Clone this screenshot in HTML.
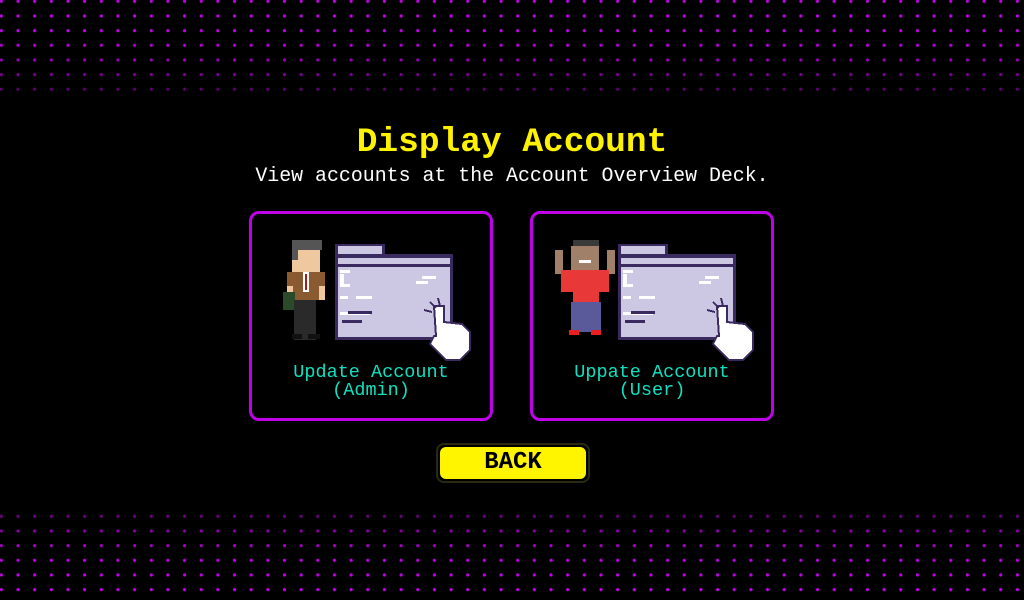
<!DOCTYPE html>
<html><head><meta charset="utf-8"><style>
html,body{margin:0;padding:0;background:#000;width:1024px;height:600px;overflow:hidden;position:relative;font-family:"Liberation Mono",monospace}
.dots{position:absolute;left:0;width:1024px;height:92px;background-image:radial-gradient(circle,#c800f0 1.3px,transparent 1.9px);background-size:16.67px 14.67px;background-position:-7px -6px}
.top{top:0;-webkit-mask-image:linear-gradient(#000 40%,rgba(0,0,0,.45));mask-image:linear-gradient(#000 40%,rgba(0,0,0,.45))}
.bot{bottom:0;height:94px;background-position:-7px 3px;-webkit-mask-image:linear-gradient(rgba(0,0,0,.45),#000 60%);mask-image:linear-gradient(rgba(0,0,0,.45),#000 60%)}
h1{position:absolute;top:123px;left:0;width:1024px;text-align:center;margin:0;color:#fff200;font-size:34.5px;line-height:40px;font-weight:bold}
.sub{position:absolute;top:164px;left:0;width:1024px;text-align:center;color:#fff;font-size:19.9px;line-height:24px}
.card{position:absolute;top:211px;width:238px;height:204px;border:3px solid #c000e8;border-radius:10px}
.card svg{position:absolute;left:0;top:0}
.lbl{position:absolute;top:150px;left:0;width:100%;text-align:center;color:#10e0c0;font-size:18.5px;line-height:18px}
.back{position:absolute;left:436px;top:443px;width:150px;height:36px;border:2px solid #2a2a10;border-radius:8px}
.back div{position:absolute;left:2px;top:2px;right:2px;bottom:2px;background:#fff500;border-radius:6px;text-align:center;font-weight:bold;font-size:24px;line-height:32px;color:#000}
</style></head><body>
<div class="dots top"></div><div class="dots bot"></div>
<h1>Display Account</h1>
<div class="sub">View accounts at the Account Overview Deck.</div>

<div class="card" style="left:249px">
<svg width="238" height="204" viewBox="0 0 238 204" shape-rendering="crispEdges">
 <rect x="40" y="26" width="30" height="10" fill="#555"/>
 <rect x="40" y="36" width="28" height="22" fill="#f0c8a0"/>
 <rect x="40" y="30" width="6" height="16" fill="#555"/>
 <rect x="35" y="58" width="38" height="28" fill="#8a5a30"/>
 <rect x="51" y="58" width="6" height="20" fill="#fff"/><rect x="53" y="60" width="2" height="16" fill="#a02020"/>
 <rect x="35" y="72" width="6" height="14" fill="#f0c8a0"/><rect x="67" y="72" width="6" height="14" fill="#f0c8a0"/>
 <rect x="31" y="78" width="12" height="18" fill="#2a4a2a"/>
 <rect x="42" y="86" width="22" height="40" fill="#2a2a2a"/>
 <rect x="40" y="120" width="10" height="5" fill="#111"/><rect x="56" y="120" width="12" height="5" fill="#111"/>
 <rect x="83" y="30" width="50" height="12" fill="#3a2a60"/>
 <rect x="86" y="32" width="44" height="10" fill="#ccc8e4"/>
 <rect x="83" y="40" width="118" height="86" fill="#3a2a60"/>
 <rect x="86" y="44" width="112" height="6" fill="#ccc8e4"/>
 <rect x="86" y="53" width="112" height="70" fill="#ccc8e4"/>
 <g fill="#fff"><rect x="88" y="56" width="10" height="3"/><rect x="88" y="60" width="4" height="10"/><rect x="88" y="70" width="10" height="3"/><rect x="88" y="82" width="8" height="3"/><rect x="104" y="82" width="16" height="3"/><rect x="170" y="62" width="14" height="3"/><rect x="164" y="67" width="12" height="3"/><rect x="88" y="98" width="30" height="3"/></g>
 <g fill="#3a2a60"><rect x="96" y="97" width="24" height="3"/><rect x="90" y="106" width="20" height="3"/></g>
 <path d="M182 92 L192 92 L192 108 L210 110 L218 118 L218 136 L208 146 L194 146 L178 130 L182 122 L184 122 Z" fill="#fff" stroke="#3a2a60" stroke-width="2"/>
 <g stroke="#3a2a60" stroke-width="2"><line x1="178" y1="88" x2="184" y2="94"/><line x1="186" y1="84" x2="188" y2="92"/><line x1="172" y1="96" x2="180" y2="98"/></g>
</svg>
<div class="lbl">Update Account<br>(Admin)</div>
</div>

<div class="card" style="left:530px">
<svg width="238" height="204" viewBox="0 0 238 204" shape-rendering="crispEdges">
 <rect x="40" y="26" width="26" height="8" fill="#3a3a3a"/>
 <rect x="38" y="32" width="28" height="24" fill="#a08068"/>
 <rect x="46" y="46" width="12" height="3" fill="#fff"/>
 <rect x="22" y="36" width="8" height="24" fill="#a08068"/><rect x="74" y="36" width="8" height="24" fill="#a08068"/>
 <rect x="28" y="56" width="48" height="22" fill="#e83838"/>
 <rect x="40" y="78" width="26" height="10" fill="#e83838"/>
 <rect x="38" y="88" width="30" height="30" fill="#5a5a9a"/>
 <rect x="36" y="116" width="10" height="5" fill="#e82020"/><rect x="58" y="116" width="10" height="5" fill="#e82020"/>
 <rect x="85" y="30" width="50" height="12" fill="#3a2a60"/>
 <rect x="88" y="32" width="44" height="10" fill="#ccc8e4"/>
 <rect x="85" y="40" width="118" height="86" fill="#3a2a60"/>
 <rect x="88" y="44" width="112" height="6" fill="#ccc8e4"/>
 <rect x="88" y="53" width="112" height="70" fill="#ccc8e4"/>
 <g fill="#fff"><rect x="90" y="56" width="10" height="3"/><rect x="90" y="60" width="4" height="10"/><rect x="90" y="70" width="10" height="3"/><rect x="90" y="82" width="8" height="3"/><rect x="106" y="82" width="16" height="3"/><rect x="172" y="62" width="14" height="3"/><rect x="166" y="67" width="12" height="3"/><rect x="90" y="98" width="30" height="3"/></g>
 <g fill="#3a2a60"><rect x="98" y="97" width="24" height="3"/><rect x="92" y="106" width="20" height="3"/></g>
 <path d="M184 92 L194 92 L194 108 L212 110 L220 118 L220 136 L210 146 L196 146 L180 130 L184 122 L186 122 Z" fill="#fff" stroke="#3a2a60" stroke-width="2"/>
 <g stroke="#3a2a60" stroke-width="2"><line x1="180" y1="88" x2="186" y2="94"/><line x1="188" y1="84" x2="190" y2="92"/><line x1="174" y1="96" x2="182" y2="98"/></g>
</svg>
<div class="lbl">Uppate Account<br>(User)</div>
</div>

<div class="back"><div>BACK</div></div>
</body></html>
